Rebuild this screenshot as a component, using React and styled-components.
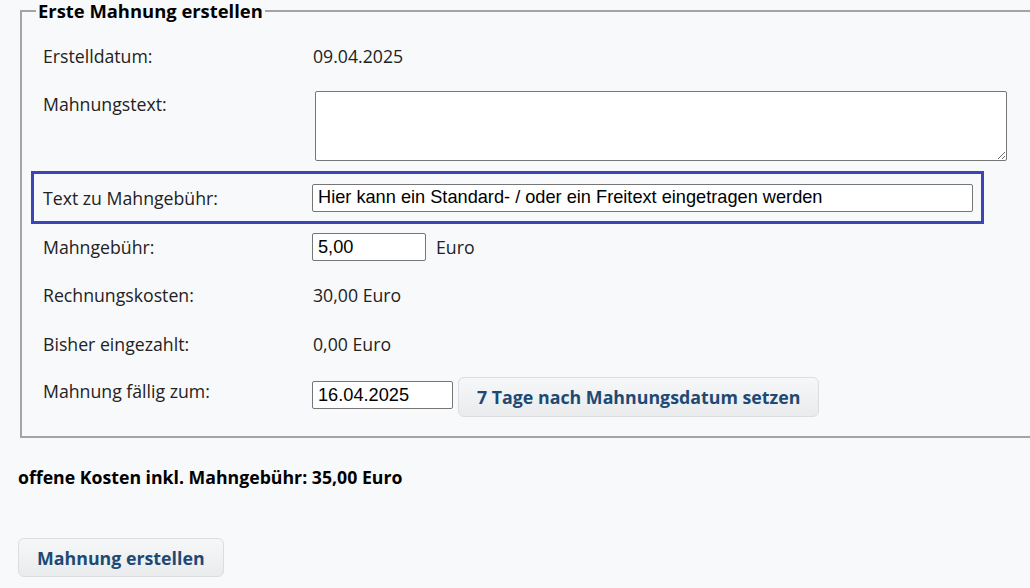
import React, { useState } from "react";
import styled, { createGlobalStyle } from "styled-components";

const GlobalStyle = createGlobalStyle`
    html, body {
        margin: 0;
        padding: 0;
        background: #f8f9fb;
        overflow: hidden;
    }
    body {
        font-family: "Open Sans", "Noto Sans", sans-serif;
        font-size: 17.7px;
        color: #222;
    }
`;

const Page = styled.div`
    padding: 0 0 0 18px;
`;

const Fieldset = styled.fieldset`
    margin: 0 -20px 0 2px;
    padding: 10px 0 13px 9px;
    border: 2px solid #a4a4a4;
    border-right: none;
`;

const Legend = styled.legend`
    margin-left: 5px;
    padding: 0 2px;
    font-weight: 700;
    font-size: 18.4px;
    line-height: 22px;
    color: #000;
`;

const Row = styled.div`
    display: flex;
    align-items: ${props => props.$align || 'center'};
    height: ${props => props.$height}px;
    padding-left: 12px;
    padding-top: ${props => props.$top || 0}px;
    box-sizing: border-box;
`;

const HighlightRow = styled(Row)`
    width: 953px;
    border: 3px solid #3b45b6;
    padding-left: 9px;
`;

const Label = styled.div`
    width: 269px;
    flex-shrink: 0;
    line-height: 24px;
    margin-top: ${props => props.$offset || 0}px;
`;

const Value = styled.div`
    line-height: 24px;
    padding-left: 1px;
`;

const TextInput = styled.input`
    box-sizing: border-box;
    width: ${props => props.$width}px;
    height: 28px;
    margin: ${props => props.$offset || 0}px 0 0 0;
    padding: 0 5px;
    border: 1px solid #767676;
    border-radius: 2px;
    background: #fff;
    font-family: "Liberation Sans", Arial, sans-serif;
    font-size: 18.2px;
    color: #000;
`;

const TextArea = styled.textarea`
    box-sizing: border-box;
    width: 692px;
    height: 70px;
    margin-left: 3px;
    border: 1px solid #767676;
    border-radius: 2px;
    background: #fff;
    font-family: "Liberation Sans", Arial, sans-serif;
    font-size: 18px;
`;

const Unit = styled.span`
    margin-left: 10px;
    line-height: 24px;
`;

const Button = styled.button`
    box-sizing: border-box;
    height: ${props => props.$height || 40}px;
    padding: 0 18px;
    margin-left: ${props => props.$gap || 0}px;
    border: 1px solid #dcdde0;
    border-radius: 6px;
    background: linear-gradient(#f6f7f8, #eaebec);
    font-family: "Open Sans", "Noto Sans", sans-serif;
    font-weight: 700;
    font-size: 17.8px;
    color: #1d4a74;
    cursor: pointer;
`;

const Summary = styled.div`
    margin-top: 27px;
    font-weight: 700;
    line-height: 24px;
    color: #000;
`;

const Actions = styled.div`
    margin-top: 49px;
`;

function App() {
    const [feeText, setFeeText] = useState('Hier kann ein Standard- / oder ein Freitext eingetragen werden');
    const [fee, setFee] = useState('5,00');
    const [due, setDue] = useState('16.04.2025');

    return (
        <Page>
            <GlobalStyle />
            <Fieldset>
                <Legend>Erste Mahnung erstellen</Legend>
                <Row $height={48}>
                    <Label>Erstelldatum:</Label>
                    <Value>09.04.2025</Value>
                </Row>
                <Row $height={91} $align="flex-start" $top={11}>
                    <Label $offset={1}>Mahnungstext:</Label>
                    <TextArea />
                </Row>
                <HighlightRow $height={53}>
                    <Label>Text zu Mahngebühr:</Label>
                    <TextInput $width={661} value={feeText} onChange={e => setFeeText(e.target.value)} />
                </HighlightRow>
                <Row $height={46}>
                    <Label>Mahngebühr:</Label>
                    <TextInput $width={114} value={fee} onChange={e => setFee(e.target.value)} />
                    <Unit>Euro</Unit>
                </Row>
                <Row $height={50}>
                    <Label>Rechnungskosten:</Label>
                    <Value>30,00 Euro</Value>
                </Row>
                <Row $height={47}>
                    <Label>Bisher eingezahlt:</Label>
                    <Value>0,00 Euro</Value>
                </Row>
                <Row $height={56} $align="flex-start" $top={10}>
                    <Label $offset={2}>Mahnung fällig zum:</Label>
                    <TextInput $width={141} $offset={4} value={due} onChange={e => setDue(e.target.value)} />
                    <Button $gap={5}>7 Tage nach Mahnungsdatum setzen</Button>
                </Row>
            </Fieldset>
            <Summary>offene Kosten inkl. Mahngebühr: 35,00 Euro</Summary>
            <Actions>
                <Button $height={39}>Mahnung erstellen</Button>
            </Actions>
        </Page>
    );
}

export default App;
